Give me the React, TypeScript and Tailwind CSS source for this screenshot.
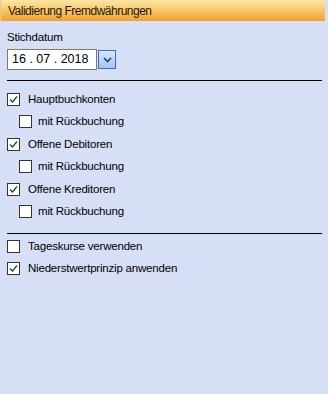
import React, { useState } from 'react'

const font = { fontFamily: '"Liberation Sans", Arial, sans-serif' }

const CheckBox = ({ label, checked, indent, onToggle }: { label: string; checked: boolean; indent?: boolean; onToggle: () => void }) => {
  return (
    <label onClick={onToggle} className={`flex items-center h-[22.5px] cursor-default ${indent ? 'pl-[12px]' : ''}`}>
      <span className='w-[13px] h-[13px] border border-[#333] bg-white flex items-center justify-center shrink-0'>
        {checked ? (
          <svg width='9' height='9' viewBox='0 0 9 9'>
            <path d='M1 4.5 L3.5 7 L8 1.5' fill='none' stroke='#333' strokeWidth='1.2' />
          </svg>
        ) : null}
      </span>
      <span className={`${indent ? 'ml-[6px]' : 'ml-[8px]'} text-[11.5px] text-black tracking-[-0.2px]`}>{label}</span>
    </label>
  )
}

const App = () => {
  const [checks, setChecks] = useState<boolean[]>([true, false, true, false, true, false, false, true])

  const toggle = (i: number) => {
    const next = [...checks]
    next[i] = !next[i]
    setChecks(next)
  }

  return (
    <div style={font} className='w-[328px] h-[394px] bg-[#d7dff7] flex flex-col overflow-hidden'>
      <div className='h-[21px] w-[325px] flex items-center pl-[7px] border-l border-[#e8c98a] bg-gradient-to-b from-[#fde6a6] via-[#f8c567] to-[#f0a02f]'>
        <span className='text-[12px] text-[#1f1a10] tracking-[-0.5px]'>Validierung Fremdwährungen</span>
      </div>

      <div className='flex flex-col px-[7px] pr-[6px]'>
        <div className='text-[11.5px] text-black mt-[8px] h-[14px] tracking-[-0.2px]'>Stichdatum</div>

        <div className='flex items-center mt-[6px]'>
          <div className='w-[90px] h-[21px] bg-white border border-[#7a7a7a] flex items-center pl-[4px] text-[12.5px] text-black'>
            16 . 07 . 2018
          </div>
          <div className='w-[18px] h-[19px] ml-[1px] border border-[#3c6fb5] bg-gradient-to-b from-[#d9e6fb] to-[#a9c4ef] flex items-center justify-center'>
            <svg width='9' height='6' viewBox='0 0 9 6'>
              <path d='M1 1 L4.5 4.5 L8 1' fill='none' stroke='#1e3f78' strokeWidth='1.6' />
            </svg>
          </div>
        </div>

        <div className='h-px bg-black mt-[10px] w-[315px]'></div>

        <div className='flex flex-col mt-[7px]'>
          <CheckBox label='Hauptbuchkonten' checked={checks[0]} onToggle={() => toggle(0)} />
          <CheckBox label='mit Rückbuchung' checked={checks[1]} indent onToggle={() => toggle(1)} />
          <CheckBox label='Offene Debitoren' checked={checks[2]} onToggle={() => toggle(2)} />
          <CheckBox label='mit Rückbuchung' checked={checks[3]} indent onToggle={() => toggle(3)} />
          <CheckBox label='Offene Kreditoren' checked={checks[4]} onToggle={() => toggle(4)} />
          <CheckBox label='mit Rückbuchung' checked={checks[5]} indent onToggle={() => toggle(5)} />
        </div>

        <div className='h-px bg-black mt-[10px] w-[315px]'></div>

        <div className='flex flex-col mt-[1px]'>
          <CheckBox label='Tageskurse verwenden' checked={checks[6]} onToggle={() => toggle(6)} />
          <CheckBox label='Niederstwertprinzip anwenden' checked={checks[7]} onToggle={() => toggle(7)} />
        </div>
      </div>
    </div>
  )
}

export default App
